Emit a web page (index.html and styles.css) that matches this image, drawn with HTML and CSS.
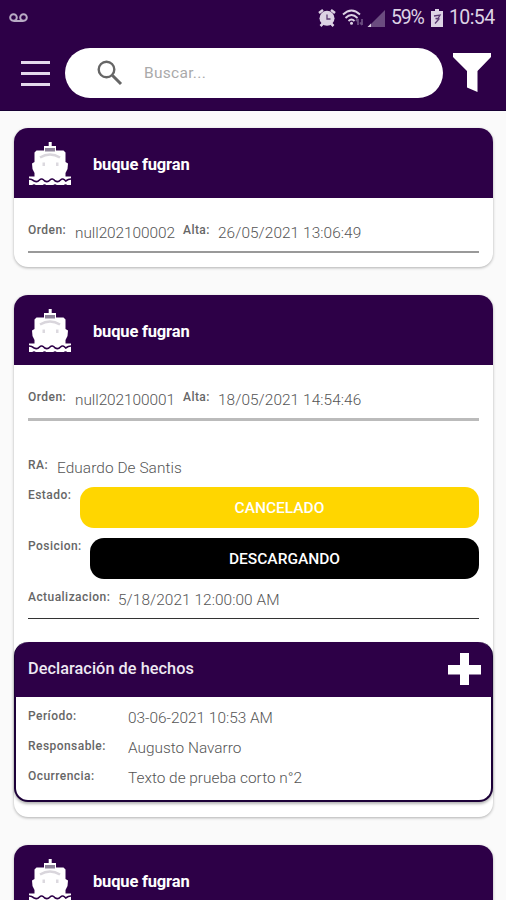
FILE: index.html
```html
<!DOCTYPE html>
<html lang="es">
<head>
    <meta charset="UTF-8">
    <meta name="viewport" content="width=device-width, initial-scale=1.0">
    <title>Buques</title>
    <link rel="stylesheet" href="styles.css">
</head>
<body>
    <!-- Shared ship icon -->
    <svg class="sprite" width="0" height="0">
        <symbol id="ship" viewBox="0 0 42 44">
            <path fill="#fff" d="M19.700 0h3v4H27v4.500h7.500l2 2V20l2.500 1.500-.5 5.500-2 4v4H5.500v-4l-2-4-.5-5.500L5.500 20v-9.500l2-2H15V4h4.700z"/>
            <path fill="#8d8399" d="M16 6h10v3.500H16z"/>
            <path fill="none" stroke="#d9d6dc" stroke-width="2.600" d="M11 15.500q10-6 20 0"/>
            <path fill="#dcd9df" d="M13.500 20.500h2.500v3.500h-2.500zM27 20.500h2.500v3.500H27z"/>
            <path fill="#fff" d="M0 34.500h42V43H0z"/>
            <path fill="none" stroke="#2d0047" stroke-width="1.600" d="M0 37q2.600 0 5.200 2 3 1.500 5.300-1t5.200 1q3 1.500 5.300-1t5.200 1q3 1.500 5.300-1t5.200 1q2.600-2 5.300-2"/>
            <path fill="#2d0047" d="M3 43.200q2-2 4 0zM13.500 43.200q2-2 4 0zM24 43.200q2-2 4 0zM34.500 43.200q2-2 4 0z"/>
        </symbol>
    </svg>

    <header class="header">
        <div class="status-bar">
            <svg class="voicemail" width="19" height="10" viewBox="0 0 19 10" fill="none" stroke="#b9abc5" stroke-width="2">
                <circle cx="4.500" cy="4.500" r="3.300"/>
                <circle cx="14.500" cy="4.500" r="3.300"/>
                <path d="M4.500 8h10"/>
            </svg>
            <svg class="alarm" width="18" height="18" viewBox="0 0 18 18">
                <path stroke="#ddd3e4" stroke-width="2.500" d="M1 4l4-3M17 4l-4-3M2.500 17l3-3M15.500 17l-3-3"/>
                <circle cx="9" cy="9.300" r="7.500" fill="#ddd3e4"/>
                <path fill="none" stroke="#5b3a72" stroke-width="1.300" d="M9 5.500v4.500h3.500"/>
            </svg>
            <svg class="wifi" width="22" height="18" viewBox="0 0 22 18" fill="none" stroke="#ddd3e4" stroke-width="1.800">
                <path d="M1 5.500q8.500-8 17 0M3.500 9q6-6 12 0M6.500 12q3-3 6 0"/>
                <circle cx="9.500" cy="14.300" r="1.500" fill="#ddd3e4" stroke="none"/>
                <path stroke="#6b4c80" d="M16 16v-6M14 12l2-2.500M20 10v6M18 13.500l2 2.500"/>
            </svg>
            <svg class="signal" width="18" height="17" viewBox="0 0 18 17">
                <path fill="#6b4c80" d="M18 0v17H1z"/>
                <path fill="#ddd3e4" d="M4 13.500V17H.5z"/>
            </svg>
            <span class="percent">59%</span>
            <svg class="battery" width="12" height="18" viewBox="0 0 12 18">
                <path fill="#ddd3e4" d="M4 0h4v2h4v16H0V2h4z"/>
                <path fill="none" stroke="#5b3a72" stroke-width="1.300" d="M3 7l6-1-2 3.500H4.500L8 10l-4 4.500"/>
            </svg>
            <span class="clock">10:54</span>
        </div>
        <div class="toolbar">
            <div class="menu"><span></span><span></span><span></span></div>
            <label class="search">
                <svg width="26" height="26" viewBox="0 0 26 26" fill="none" stroke="#666">
                    <circle cx="9.500" cy="9.500" r="7.800" stroke-width="2.400"/>
                    <path stroke-width="3" d="M15.500 15.500l8.500 8.500"/>
                </svg>
                <input type="text" placeholder="Buscar...">
            </label>
            <svg class="filter" width="40" height="40" viewBox="0 0 40 40">
                <path fill="#fff" d="M1 0h38v4L25.500 18v21L15 34.500V18L1 4z"/>
            </svg>
        </div>
    </header>

    <main class="list">
        <section class="card">
            <div class="card-header">
                <svg width="42" height="44"><use href="#ship"/></svg>
                <h2>buque fugran</h2>
            </div>
            <div class="card-body">
                <div class="row order">
                    <span class="label orden">Orden:</span>
                    <span class="value number">null202100002</span>
                    <span class="label alta">Alta:</span>
                    <span class="value">26/05/2021 13:06:49</span>
                </div>
            </div>
        </section>

        <section class="card open">
            <div class="card-header">
                <svg width="42" height="44"><use href="#ship"/></svg>
                <h2>buque fugran</h2>
            </div>
            <div class="card-body">
                <div class="row order">
                    <span class="label orden">Orden:</span>
                    <span class="value number">null202100001</span>
                    <span class="label alta">Alta:</span>
                    <span class="value">18/05/2021 14:54:46</span>
                </div>
                <div class="row ra">
                    <span class="label">RA:</span>
                    <span class="value">Eduardo De Santis</span>
                </div>
                <div class="row state">
                    <span class="label">Estado:</span>
                    <span class="pill cancelled">CANCELADO</span>
                </div>
                <div class="row position">
                    <span class="label">Posicion:</span>
                    <span class="pill unloading">DESCARGANDO</span>
                </div>
                <div class="row updated">
                    <span class="label">Actualizacion:</span>
                    <span class="value">5/18/2021 12:00:00 AM</span>
                </div>
            </div>
            <div class="facts">
                <div class="facts-header">
                    <h3>Declaración de hechos</h3>
                    <svg width="33" height="33" viewBox="0 0 33 33">
                        <path fill="#fff" d="M12 0h9v12h12v9.500H21V32h-9V21.500H0V12h12z"/>
                    </svg>
                </div>
                <div class="facts-body">
                    <div class="row">
                        <span class="label">Período:</span>
                        <span class="value">03-06-2021 10:53 AM</span>
                    </div>
                    <div class="row">
                        <span class="label">Responsable:</span>
                        <span class="value">Augusto Navarro</span>
                    </div>
                    <div class="row">
                        <span class="label">Ocurrencia:</span>
                        <span class="value">Texto de prueba corto n°2</span>
                    </div>
                </div>
            </div>
        </section>

        <section class="card">
            <div class="card-header">
                <svg width="42" height="44"><use href="#ship"/></svg>
                <h2>buque fugran</h2>
            </div>
        </section>
    </main>
</body>
</html>
```
FILE: styles.css
```css
* {
    box-sizing: border-box;
}

body {
    display: flex;
    flex-direction: column;
    margin: 0;
    height: 100vh;
    overflow: hidden;
    background-color: #fafafa;
    font-family: Roboto, Arial, sans-serif;
    color: #777;
}

.sprite {
    display: block;
}

/* Header */
.header {
    flex-shrink: 0;
    height: 111px;
    background-color: #2d0047;
    border-bottom: 1px solid #170033;
}

.status-bar {
    display: flex;
    align-items: center;
    height: 36px;
    padding: 0 11px 0 9px;
    color: #ddd3e4;
    font-size: 19.5px;
    line-height: 38px;
}

.alarm {
    margin-left: auto;
}

.wifi {
    margin-left: 6px;
}

.signal {
    margin-left: 3px;
}

.percent {
    width: 34px;
    margin-left: 6px;
    letter-spacing: -1.2px;
}

.battery {
    margin-left: 6px;
}

.clock {
    width: 46px;
    margin-left: 6px;
    letter-spacing: -0.6px;
}

.toolbar {
    display: flex;
    align-items: center;
    height: 74px;
    padding-left: 21px;
}

.menu {
    display: flex;
    flex-direction: column;
    gap: 8px;
    width: 29px;
}

.menu span {
    height: 3px;
    background-color: #e4d9ec;
}

.search {
    display: flex;
    align-items: center;
    width: 378px;
    height: 50px;
    margin-left: 15px;
    padding-left: 32px;
    border-radius: 25px;
    background-color: #fff;
}

.search input {
    width: 200px;
    margin-left: 21px;
    padding: 0;
    border: none;
    outline: none;
    font-family: inherit;
    font-size: 15.5px;
    letter-spacing: 0.3px;
}

.search input::placeholder {
    color: #aaa;
}

.filter {
    margin-left: 9px;
}

/* Ship cards */
.list {
    display: flex;
    flex: 1;
    flex-direction: column;
    gap: 28px;
    min-height: 0;
    padding: 17px 13px 0 14px;
    overflow: hidden;
}

.card {
    height: 139px;
    flex-shrink: 0;
    border-radius: 14px;
    background-color: #fff;
    box-shadow: 0 1px 3px rgba(0, 0, 0, 0.3);
}

.card.open {
    height: 522px;
}

.card-header {
    display: flex;
    align-items: center;
    height: 70px;
    padding: 2px 0 0 15px;
    border-radius: 14px 14px 0 0;
    background-color: #2d0047;
}

.card-header h2 {
    margin: 1px 0 0 22px;
    color: #fff;
    font-size: 16.5px;
    font-weight: 700;
    letter-spacing: -0.17px;
}

.card-body {
    padding: 0 14px;
}

.row {
    display: flex;
    align-items: flex-start;
}

.label {
    color: #666;
    font-size: 12px;
    font-weight: 500;
    line-height: 16px;
    letter-spacing: 0.45px;
    white-space: nowrap;
}

.value {
    margin-top: 2px;
    font-size: 15.4px;
    font-weight: 300;
    line-height: 18px;
    letter-spacing: 0.07px;
    white-space: nowrap;
    color: #555;
}

.order {
    height: 55px;
    padding-top: 24px;
    border-bottom: 2px solid #999;
}

.orden {
    width: 47px;
}

.number {
    width: 108px;
    letter-spacing: -0.05px;
}

.alta {
    width: 35px;
}

.open .order {
    height: 56px;
    border-bottom: 3px solid #bbb;
}

.ra {
    height: 66px;
    padding-top: 36px;
}

.ra .label {
    width: 29px;
}

.state,
.position {
    height: 51px;
}

.state .label {
    width: 52px;
}

.position .label {
    width: 62px;
}

.pill {
    flex: 1;
    height: 41px;
    border-radius: 14px;
    color: #fff;
    font-size: 15.5px;
    font-weight: 500;
    line-height: 43px;
    text-align: center;
}

.cancelled {
    background-color: #ffd600;
}

.unloading {
    background-color: #000;
}

.updated {
    height: 30px;
    border-bottom: 1.5px solid #333;
}

.updated .label {
    width: 90px;
}

/* Statement of facts */
.facts {
    height: 160px;
    margin-top: 23px;
    border: 2px solid #1c0038;
    border-top: none;
    border-radius: 14px;
    background-color: #fff;
    box-shadow: 0 2px 3px rgba(0, 0, 0, 0.3);
}

.facts-header {
    display: flex;
    align-items: center;
    justify-content: space-between;
    height: 55px;
    margin: 0 -1px;
    padding: 0 11px 0 13px;
    border-radius: 14px 14px 0 0;
    background-color: #2d0047;
}

.facts-header h3 {
    margin: 0 0 3px;
    color: #eee8f2;
    font-size: 16.3px;
    font-weight: 500;
    letter-spacing: 0.05px;
}

.facts-body {
    padding: 11px 12px 0;
}

.facts-body .row {
    height: 30px;
}

.facts-body .label {
    width: 100px;
}

.facts-body .value {
    margin-top: 1px;
    letter-spacing: 0;
}
```
